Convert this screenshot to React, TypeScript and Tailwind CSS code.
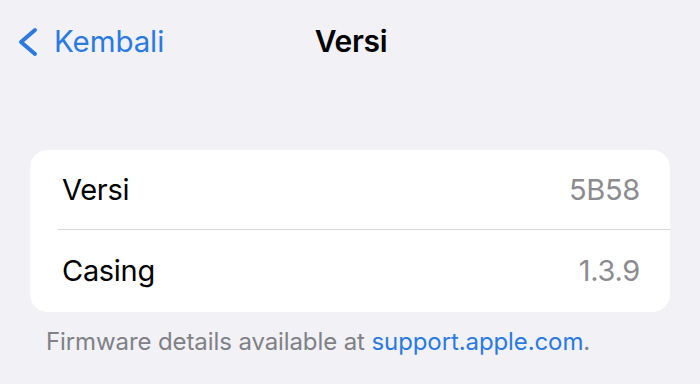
export default function App() {
  return (
    <div
      className="w-[700px] h-[384px] bg-[#f1f1f6] overflow-hidden"
      style={{ fontFamily: "Inter, 'Noto Sans', sans-serif" }}
    >
      {/* NAV BAR */}
      <div className="relative h-[84px]">
        <div className="absolute left-[16px] top-[27px] flex items-center gap-[16px] text-[#2a7ae2]">
          <svg width="22" height="30" viewBox="0 0 22 30" fill="none">
            <path
              d="M19 3 L5 15 L19 27"
              stroke="currentColor"
              strokeWidth="4"
              strokeLinecap="round"
              strokeLinejoin="round"
            />
          </svg>
          <span className="text-[29.5px] leading-none tracking-[-0.1px]">Kembali</span>
        </div>
        <div className="absolute left-0 right-0 top-[26px] text-center text-[30px] leading-none font-semibold text-black tracking-[-0.3px] pl-[2px]">
          Versi
        </div>
      </div>

      {/* CARD */}
      <div className="mt-[66px] mx-[30px] bg-white rounded-[18px] overflow-hidden">
        <div className="h-[79px] flex items-center justify-between pl-[32px] pr-[30px]">
          <span className="text-[29px] text-black tracking-[-0.3px]">Versi</span>
          <span className="text-[29px] text-[#8b8b90] tracking-[-0.3px]">5B58</span>
        </div>
        <div className="ml-[28px] h-px bg-[#d8d8dc]" />
        <div className="h-[82px] flex items-center justify-between pl-[32px] pr-[30px]">
          <span className="text-[29px] text-black tracking-[-0.3px]">Casing</span>
          <span className="text-[29px] text-[#8b8b90] tracking-[-0.3px]">1.3.9</span>
        </div>
      </div>

      {/* FOOTER */}
      <p className="mt-[12px] pl-[46px] text-[24px] text-[#808086] tracking-[-0.1px]">
        Firmware details available at{" "}
        <span className="text-[#2a7ae2]">support.apple.com</span>.
      </p>
    </div>
  );
}
